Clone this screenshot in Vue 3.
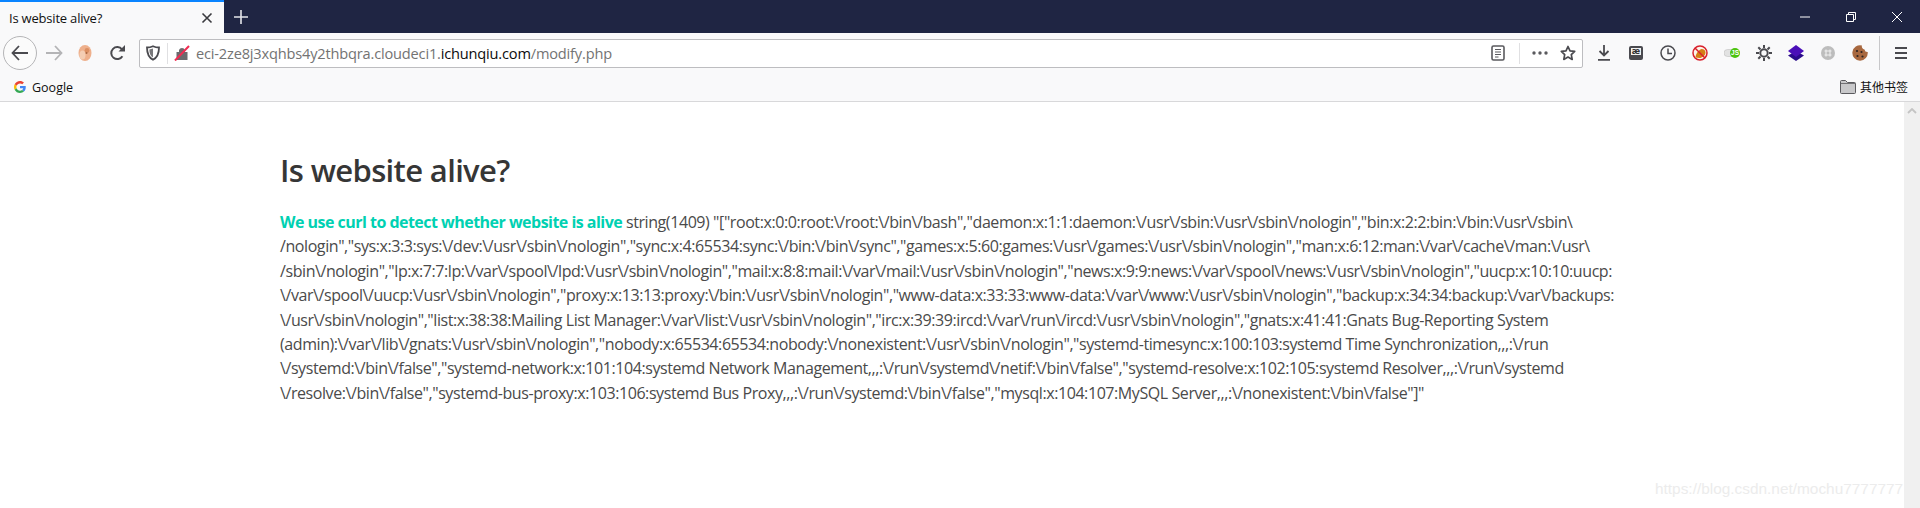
<script setup>
const firstLine = ' string(1409) "["root:x:0:0:root:\\/root:\\/bin\\/bash","daemon:x:1:1:daemon:\\/usr\\/sbin:\\/usr\\/sbin\\/nologin","bin:x:2:2:bin:\\/bin:\\/usr\\/sbin\\'
const lines = [
  '/nologin","sys:x:3:3:sys:\\/dev:\\/usr\\/sbin\\/nologin","sync:x:4:65534:sync:\\/bin:\\/bin\\/sync","games:x:5:60:games:\\/usr\\/games:\\/usr\\/sbin\\/nologin","man:x:6:12:man:\\/var\\/cache\\/man:\\/usr\\',
  '/sbin\\/nologin","lp:x:7:7:lp:\\/var\\/spool\\/lpd:\\/usr\\/sbin\\/nologin","mail:x:8:8:mail:\\/var\\/mail:\\/usr\\/sbin\\/nologin","news:x:9:9:news:\\/var\\/spool\\/news:\\/usr\\/sbin\\/nologin","uucp:x:10:10:uucp:',
  '\\/var\\/spool\\/uucp:\\/usr\\/sbin\\/nologin","proxy:x:13:13:proxy:\\/bin:\\/usr\\/sbin\\/nologin","www-data:x:33:33:www-data:\\/var\\/www:\\/usr\\/sbin\\/nologin","backup:x:34:34:backup:\\/var\\/backups:',
  '\\/usr\\/sbin\\/nologin","list:x:38:38:Mailing List Manager:\\/var\\/list:\\/usr\\/sbin\\/nologin","irc:x:39:39:ircd:\\/var\\/run\\/ircd:\\/usr\\/sbin\\/nologin","gnats:x:41:41:Gnats Bug-Reporting System',
  '(admin):\\/var\\/lib\\/gnats:\\/usr\\/sbin\\/nologin","nobody:x:65534:65534:nobody:\\/nonexistent:\\/usr\\/sbin\\/nologin","systemd-timesync:x:100:103:systemd Time Synchronization,,,:\\/run',
  '\\/systemd:\\/bin\\/false","systemd-network:x:101:104:systemd Network Management,,,:\\/run\\/systemd\\/netif:\\/bin\\/false","systemd-resolve:x:102:105:systemd Resolver,,,:\\/run\\/systemd',
  '\\/resolve:\\/bin\\/false","systemd-bus-proxy:x:103:106:systemd Bus Proxy,,,:\\/run\\/systemd:\\/bin\\/false","mysql:x:104:107:MySQL Server,,,:\\/nonexistent:\\/bin\\/false"]"'
]
</script>

<template>
  <div class="window">
    <header class="tabbar">
      <div class="tab">
        <span class="tab-title">Is website alive?</span>
        <svg class="tab-close" width="12" height="12" viewBox="0 0 12 12"><path d="M1.5 1.5l9 9M10.5 1.5l-9 9" stroke="#3a3a3f" stroke-width="1.6" fill="none"/></svg>
      </div>
      <svg class="tab-new" width="14" height="14" viewBox="0 0 14 14"><path d="M7 0v14M0 7h14" stroke="#e4e5ea" stroke-width="1.6" fill="none"/></svg>
      <div class="win-controls">
        <svg width="46" height="12" viewBox="0 0 46 12"><path d="M18 6h10" stroke="#fff" fill="none"/></svg>
        <svg width="46" height="12" viewBox="0 0 46 12"><path d="M18.5 3.5h7v7h-7zM20.5 3.5v-2h7v7h-2" stroke="#fff" fill="none"/></svg>
        <svg width="46" height="12" viewBox="0 0 46 12"><path d="M18 1l10 10M28 1l-10 10" stroke="#fff" fill="none"/></svg>
      </div>
    </header>

    <div class="toolbar">
      <div class="back">
        <svg width="18" height="16" viewBox="0 0 18 16"><path d="M8 1L1.5 8 8 15M2 8h15" stroke="#4a4a4f" stroke-width="1.8" fill="none"/></svg>
      </div>
      <svg class="forward" width="18" height="16" viewBox="0 0 18 16"><path d="M10 1l6.5 7-6.5 7M16 8H1" stroke="#b4b4b6" stroke-width="1.8" fill="none"/></svg>
      <svg class="favicon" width="16" height="18" viewBox="0 0 16 18"><ellipse cx="8" cy="9" rx="6.500" ry="8" fill="#eeb08c"/><ellipse cx="5.500" cy="11" rx="3" ry="4.500" fill="#f4cdb3"/><circle cx="10" cy="6.500" r="2.400" fill="#dc8f62"/><circle cx="9.500" cy="9" r="1" fill="#a8653f"/></svg>
      <svg class="reload" width="17" height="16" viewBox="0 0 17 16"><path d="M13.400 11.200A6 6 0 1 1 13 4.400" stroke="#4a4a4f" stroke-width="2" fill="none"/><path d="M9.500 6.500H16V0z" fill="#4a4a4f"/></svg>

      <div class="urlbar">
        <svg class="shield" width="16" height="16" viewBox="0 0 16 16"><path d="M8 1.200c2 .9 4 1.300 6 1.300 0 6-1.600 10-6 12.300C3.600 12.500 2 8.500 2 2.500c2 0 4-.4 6-1.300z" stroke="#4a4a4f" stroke-width="1.800" fill="none"/><path d="M8 3.500v9c-2.500-1.500-3.600-4-3.700-8z" fill="#77777a"/></svg>
        <span class="url-sep"></span>
        <svg class="lock" width="16" height="16" viewBox="0 0 16 16"><path d="M5 7V5a3.200 3.200 0 0 1 6 0v2h2.500v8H2.500V7z" fill="#6b6b6e"/><path d="M1 15.500L15 1" stroke="#f12c52" stroke-width="2"/></svg>
        <span class="url"><span class="dim">eci-2ze8j3xqhbs4y2thbqra.cloudeci1.</span>ichunqiu.com<span class="dim">/modify.php</span></span>
        <svg class="reader" width="14" height="16" viewBox="0 0 14 16"><rect x="1" y="1" width="12" height="14" rx="1.500" stroke="#5a5a5e" stroke-width="1.600" fill="none"/><path d="M4 4.500h6M4 7h6M4 9.500h6M4 12h3.500" stroke="#5a5a5e" stroke-width="1.100"/></svg>
        <span class="url-sep right"></span>
        <svg class="dots" width="16" height="4" viewBox="0 0 16 4"><circle cx="2" cy="2" r="1.700" fill="#5a5a5e"/><circle cx="8" cy="2" r="1.700" fill="#5a5a5e"/><circle cx="14" cy="2" r="1.700" fill="#5a5a5e"/></svg>
        <svg class="star" width="16" height="16" viewBox="0 0 16 16"><path d="M8 1.500l2 4.300 4.700.6-3.400 3.300.9 4.700L8 12.100l-4.200 2.300.9-4.700L1.300 6.400 6 5.800z" stroke="#4a4a4f" stroke-width="1.700" fill="none" stroke-linejoin="round"/></svg>
      </div>

      <div class="tools">
        <span class="tool"><svg width="14" height="16" viewBox="0 0 14 16"><path d="M7 0v10M2.500 6L7 10.500 11.500 6M1 14.800h12" stroke="#4a4a4f" stroke-width="1.800" fill="none"/></svg></span>
        <span class="tool"><svg width="14" height="14" viewBox="0 0 14 14"><rect width="14" height="14" rx="2" fill="#4a4a4f"/><rect x="2" y="2" width="10" height="7" fill="#f2f2f2"/><text x="7" y="8" text-anchor="middle" class="ae">æ</text></svg></span>
        <span class="tool"><svg width="16" height="16" viewBox="0 0 16 16"><circle cx="8" cy="8" r="7" stroke="#4a4a4f" stroke-width="1.500" fill="none"/><path d="M8 3.500V8.500h4" stroke="#4a4a4f" stroke-width="1.500" fill="none"/></svg></span>
        <span class="tool"><svg width="16" height="16" viewBox="0 0 16 16"><circle cx="8" cy="8" r="7" fill="#fdf3e8" stroke="#d8202c" stroke-width="1.500"/><path d="M3.500 12.500c.2-3.500 3-7.500 6-8.500 2.500 0 4 1.500 4 3.500 0 3-3.500 5.500-6 5.500z" fill="#d47f14"/><path d="M3 3l10 10" stroke="#d8202c" stroke-width="1.500"/></svg></span>
        <span class="tool"><svg width="16" height="12" viewBox="0 0 16 12"><rect x="0" y="2.500" width="12" height="7" rx="3.500" fill="#e2e2e2" stroke="#c0c0c0" stroke-width=".6"/><circle cx="11" cy="6" r="5" fill="#4cc40e"/><text x="11" y="8.300" text-anchor="middle" class="js">JS</text></svg></span>
        <span class="tool"><svg width="16" height="16" viewBox="0 0 16 16"><circle cx="8" cy="8" r="3.700" stroke="#4a4a4f" stroke-width="2" fill="none"/><path d="M8 0v3M8 13v3M0 8h3M13 8h3M2.300 2.300l2.200 2.200M11.500 11.500l2.200 2.200M13.700 2.300l-2.200 2.200M4.500 11.500l-2.200 2.200" stroke="#4a4a4f" stroke-width="2"/></svg></span>
        <span class="tool"><svg width="16" height="16" viewBox="0 0 16 16"><path d="M8 6L16 10.500 8 16 0 10.500z" fill="#2a0b8a"/><path d="M8 0l8 6-8 6-8-6z" fill="#4a0fb8"/></svg></span>
        <span class="tool"><svg width="14" height="14" viewBox="0 0 14 14"><circle cx="7" cy="7" r="7" fill="#bdbdbd"/><path d="M5 3.500v7M9 3.500v7M3.500 5h7M3.500 9h7" stroke="#f0f0f0" stroke-width="1.100" fill="none"/></svg></span>
        <span class="tool"><svg width="16" height="16" viewBox="0 0 16 16"><path d="M10 .5A7.700 7.700 0 1 0 15.700 7 3 3 0 0 1 12.500 4.500 3 3 0 0 1 10 .5z" fill="#a8683f"/><circle cx="5" cy="6" r="1.100" fill="#2e2320"/><circle cx="9.500" cy="7" r="1.100" fill="#2e2320"/><circle cx="5.500" cy="11" r="1.100" fill="#2e2320"/><circle cx="10.500" cy="11.500" r="1.100" fill="#2e2320"/></svg></span>
        <span class="tool-sep"></span>
        <svg class="menu" width="12" height="12" viewBox="0 0 12 12"><path d="M0 1h12M0 6h12M0 11h12" stroke="#4a4a4f" stroke-width="1.800"/></svg>
      </div>
    </div>

    <nav class="bookmarks">
      <svg class="g" width="12" height="12" viewBox="0 0 48 48"><path fill="#EA4335" d="M24 9.500c3.900 0 6.900 1.600 9.100 3.600l6.800-6.800C35.900 2.500 30.400 0 24 0 14.600 0 6.600 5.400 2.600 13.200l7.900 6.200C12.400 13.700 17.700 9.500 24 9.500z"/><path fill="#4285F4" d="M47 24.500c0-1.600-.1-3.100-.4-4.500H24v9h13c-.6 3-2.300 5.500-4.800 7.200l7.700 6C44.400 38 47 31.800 47 24.500z"/><path fill="#FBBC05" d="M10.500 28.600c-.5-1.400-.8-3-.8-4.600s.3-3.200.8-4.600l-7.900-6.200C.9 16.500 0 20.100 0 24s.9 7.500 2.600 10.800z"/><path fill="#34A853" d="M24 48c6.500 0 11.900-2.100 15.900-5.800l-7.700-6c-2.200 1.400-4.900 2.300-8.200 2.300-6.300 0-11.600-4.200-13.500-9.900l-7.900 6.200C6.600 42.600 14.600 48 24 48z"/></svg>
      <span class="bm-label">Google</span>
      <span class="bm-spacer"></span>
      <svg class="folder" width="16" height="14" viewBox="0 0 16 14"><path d="M.5 12.500V1.500a1 1 0 0 1 1-1h4l2 2h7a1 1 0 0 1 1 1v9a1 1 0 0 1-1 1h-13a1 1 0 0 1-1-1z" fill="#c8c8ca" stroke="#5a5a5e"/><path d="M1 3.500h14" stroke="#5a5a5e" stroke-width=".8"/></svg>
      <span class="bm-other">其他书签</span>
    </nav>

    <div class="viewport">
      <main class="page">
        <section class="container">
          <h1 class="title">Is website alive?</h1>
          <p class="body"><strong class="lead">We use curl to detect whether website is alive</strong>{{ firstLine }}<template v-for="(l, i) in lines" :key="i"><br>{{ l }}</template></p>
        </section>
      </main>
      <aside class="scrollbar">
        <svg width="10" height="6" viewBox="0 0 10 6"><path d="M1 5l4-4 4 4" stroke="#c4c4c4" stroke-width="1.800" fill="none"/></svg>
      </aside>
      <span class="watermark">https://blog.csdn.net/mochu7777777</span>
    </div>
  </div>
</template>

<style>
html, body { margin: 0; overflow: hidden; background: #fff; }
</style>

<style scoped>
.window { height: 508px; width: 1920px; display: flex; flex-direction: column; font-family: "Open Sans", "Noto Sans CJK SC", sans-serif; }
.tabbar { height: 33px; flex: none; background: #1f2543; display: flex; align-items: center; }
.tab { width: 224px; height: 33px; box-sizing: border-box; background: #f9f9fa; border-top: 2px solid #0a84ff; display: flex; align-items: center; padding: 0 11px 0 9px; justify-content: space-between; }
.tab-title { font-size: 13px; color: #111; letter-spacing: -.2px; }
.tab-new { margin-left: 10px; }
.win-controls { margin-left: auto; display: flex; align-items: center; }
.toolbar { height: 40px; flex: none; background: #f9f9fa; display: flex; align-items: center; }
.back { width: 32px; height: 32px; margin-left: 3px; border: 1px solid #b5b5b7; border-radius: 50%; background: #fbfbfb; display: flex; align-items: center; justify-content: center; }
.forward { margin-left: 8px; }
.favicon { margin-left: 14px; }
.reload { margin-left: 16px; }
.urlbar { width: 1444px; height: 29px; margin-left: 13px; box-sizing: border-box; border: 1px solid #bdbdc0; border-radius: 2px; background: #fff; display: flex; align-items: center; }
.shield { margin-left: 5px; }
.url-sep { width: 1px; height: 21px; background: #e0e0e2; margin-left: 6px; }
.url-sep.right { margin-left: 14px; }
.lock { margin-left: 6px; }
.url { margin-left: 6px; font-size: 14.600px; color: #0c0c0d; white-space: nowrap; letter-spacing: -.18px; }
.dim { color: #737373; }
.reader { margin-left: auto; }
.dots { margin-left: 12px; }
.star { margin-left: 12px; margin-right: 6px; }
.tools { display: flex; align-items: center; height: 40px; margin-left: 5px; }
.tool { width: 32px; display: flex; justify-content: center; align-items: center; }
.tool-sep { width: 1px; height: 34px; background: #c8c8ca; margin-left: 3px; }
.menu { margin-left: 15px; }
.ae { font: 700 8px "DejaVu Sans", sans-serif; fill: #333; }
.js { font: 700 6.500px "Liberation Sans", sans-serif; fill: #fff; }
.bookmarks { height: 29px; flex: none; box-sizing: border-box; background: #f9f9fa; border-bottom: 1px solid #d8d8da; display: flex; align-items: center; padding: 0 12px 0 14px; }
.bm-label { margin-left: 6px; font-size: 12.500px; color: #111; }
.bm-spacer { flex: 1; }
.bm-other { margin-left: 4px; font-size: 12px; color: #111; }
.viewport { flex: 1; display: flex; position: relative; overflow: hidden; background: #fff; }
.page { flex: 1; padding: 50px 0 0; }
.container { width: 1344px; margin: 0 auto; }
.title { margin: 0 0 22px; font-size: 31px; line-height: 36px; font-weight: 600; color: #363636; letter-spacing: -.65px; }
.body { margin: 0; font-size: 16px; line-height: 24.400px; color: #4a4a4a; white-space: nowrap; letter-spacing: -.42px; }
.lead { color: #00d1b2; font-weight: 700; letter-spacing: -.52px; }
.scrollbar { width: 16px; flex: none; background: #f0f0f0; display: flex; justify-content: center; padding-top: 6px; box-sizing: border-box; }
.watermark { position: absolute; left: 1655px; top: 378px; font: 15.400px "Liberation Sans", sans-serif; color: #ececec; white-space: nowrap; }
</style>
